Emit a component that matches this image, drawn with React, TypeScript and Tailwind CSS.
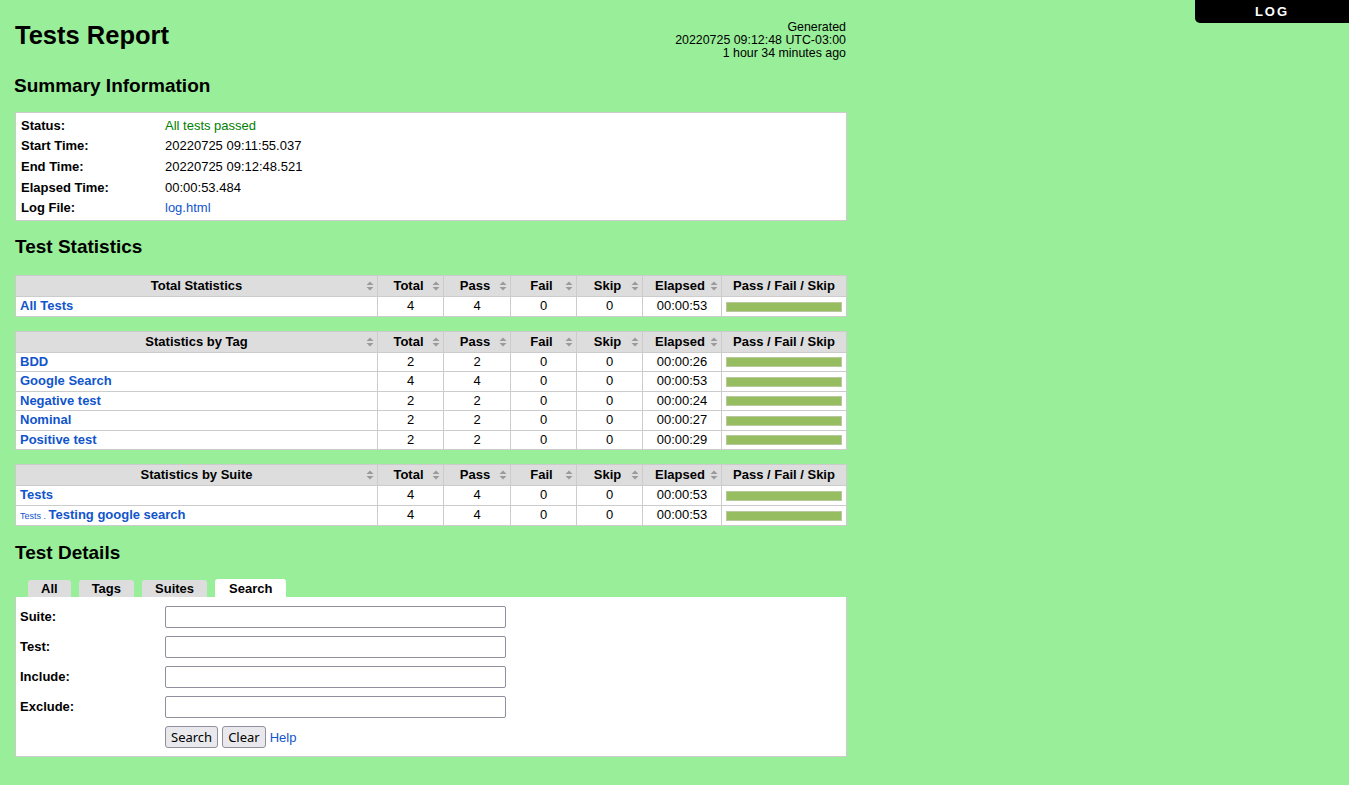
import React from 'react';

const LINK = 'text-[#1155cc]';

const SortIcon: React.FC = () => (
  <svg width="8" height="11" viewBox="0 0 8 11" className="block">
    <path d="M4 1 L7.5 4.5 L0.5 4.5 Z" fill="#9a9a9a" />
    <path d="M4 10 L7.5 6.5 L0.5 6.5 Z" fill="#9a9a9a" />
  </svg>
);

type Row = { name: React.ReactNode; total: number; pass: number; elapsed: string };

const cols = [
  { label: 'Total', w: 'w-[66px]' },
  { label: 'Pass', w: 'w-[67px]' },
  { label: 'Fail', w: 'w-[66px]' },
  { label: 'Skip', w: 'w-[66px]' },
  { label: 'Elapsed', w: 'w-[79px]' },
];

const StatTable: React.FC<{ title: string; rows: Row[] }> = ({ title, rows }) => (
  <table className="w-[832px] border-collapse border border-[#cccccc] bg-white text-[13px] leading-[18.5px] mb-[14px] table-fixed">
    <thead>
      <tr className="h-[21px] bg-[#dddddd]">
        <th className="border border-[#cccccc] font-bold relative">
          {title}
          <span className="absolute right-[3px] top-1/2 -translate-y-1/2"><SortIcon /></span>
        </th>
        {cols.map((c) => (
          <th key={c.label} className={`${c.w} border border-[#cccccc] font-bold relative pr-[4px]`}>
            {c.label}
            <span className="absolute right-[3px] top-1/2 -translate-y-1/2"><SortIcon /></span>
          </th>
        ))}
        <th className="w-[125px] border border-[#cccccc] font-bold">Pass / Fail / Skip</th>
      </tr>
    </thead>
    <tbody>
      {rows.map((r, i) => (
        <tr key={i}>
          <td className={`border border-[#cccccc] px-[4px] font-bold ${LINK}`}>{r.name}</td>
          <td className="border border-[#cccccc] text-center">{r.total}</td>
          <td className="border border-[#cccccc] text-center">{r.pass}</td>
          <td className="border border-[#cccccc] text-center">0</td>
          <td className="border border-[#cccccc] text-center">0</td>
          <td className="border border-[#cccccc] text-center">{r.elapsed}</td>
          <td className="border border-[#cccccc] px-[4px]">
            <div className="h-[10px] bg-[#97bd61] border border-[#b8c9a0]" />
          </td>
        </tr>
      ))}
    </tbody>
  </table>
);

const summary: [string, React.ReactNode][] = [
  ['Status:', <span className="text-[#008000]">All tests passed</span>],
  ['Start Time:', '20220725 09:11:55.037'],
  ['End Time:', '20220725 09:12:48.521'],
  ['Elapsed Time:', '00:00:53.484'],
  ['Log File:', <span className={LINK}>log.html</span>],
];

const btn =
  "h-[22px] px-[5px] border border-[#8f8f9d] rounded-[3px] bg-[#e9e9ed] font-['Noto_Sans',sans-serif] text-[13px] leading-[18px]";

const App: React.FC = () => {
  return (
    <div className="min-h-[785px] bg-[#99ee99] text-black font-['Liberation_Sans',Arial,sans-serif] text-[13px] relative">
      <div className="absolute right-0 top-0 w-[154px] h-[23px] bg-black rounded-bl-[5px] text-white font-bold text-[13px] tracking-[2px] flex items-center justify-center">
        LOG
      </div>
      <div className="w-[832px] ml-[15px] pt-[19px]">
        <div className="flex justify-between">
          <h1 className="text-[25.5px] font-bold leading-[30px] mt-[1px]">Tests Report</h1>
          <div className="text-right text-[12.4px] leading-[13px] pr-[1px] mt-[2px]">
            <div>Generated</div>
            <div>20220725 09:12:48 UTC-03:00</div>
            <div>1 hour 34 minutes ago</div>
          </div>
        </div>

        <h2 className="text-[19px] font-bold leading-[24px] mt-[14px] -ml-[1px]">Summary Information</h2>
        <div className="mt-[14px] bg-white border border-[#cccccc] py-[2px]">
          {summary.map(([k, v]) => (
            <div key={k} className="flex h-[20.7px] items-center">
              <div className="w-[149px] pl-[5px] font-bold">{k}</div>
              <div>{v}</div>
            </div>
          ))}
        </div>

        <h2 className="text-[19px] font-bold leading-[24px] mt-[14px]">Test Statistics</h2>
        <div className="mt-[16px]">
          <StatTable
            title="Total Statistics"
            rows={[{ name: 'All Tests', total: 4, pass: 4, elapsed: '00:00:53' }]}
          />
          <StatTable
            title="Statistics by Tag"
            rows={[
              { name: 'BDD', total: 2, pass: 2, elapsed: '00:00:26' },
              { name: 'Google Search', total: 4, pass: 4, elapsed: '00:00:53' },
              { name: 'Negative test', total: 2, pass: 2, elapsed: '00:00:24' },
              { name: 'Nominal', total: 2, pass: 2, elapsed: '00:00:27' },
              { name: 'Positive test', total: 2, pass: 2, elapsed: '00:00:29' },
            ]}
          />
          <StatTable
            title="Statistics by Suite"
            rows={[
              { name: 'Tests', total: 4, pass: 4, elapsed: '00:00:53' },
              {
                name: (
                  <>
                    <span className="text-[9px] font-normal">Tests . </span>Testing google search
                  </>
                ),
                total: 4,
                pass: 4,
                elapsed: '00:00:53',
              },
            ]}
          />
        </div>

        <h2 className="text-[19px] font-bold leading-[24px] mt-[15px]">Test Details</h2>
        <div className="flex items-end gap-[8px] pl-[13px] mt-[14px]">
          {['All', 'Tags', 'Suites'].map((t) => (
            <div key={t} className="h-[17px] px-[13px] bg-[#dddddd] rounded-t-[3px] font-bold leading-[17px]">
              {t}
            </div>
          ))}
          <div className="h-[18px] px-[14px] bg-white rounded-t-[3px] font-bold leading-[20px]">Search</div>
        </div>
        <div className="bg-white border border-[#cccccc] border-t-0 pt-[9px] pb-[8px]">
          {['Suite:', 'Test:', 'Include:', 'Exclude:'].map((l) => (
            <div key={l} className="flex items-start h-[30px]">
              <div className="w-[149px] pl-[4px] font-bold pt-[1px]">{l}</div>
              <input className="w-[341px] h-[22px] border border-[#8f8f9d] rounded-[2px] bg-white" />
            </div>
          ))}
          <div className="flex items-center gap-[4px] pl-[149px]">
            <button className={btn}>Search</button>
            <button className={btn}>Clear</button>
            <span className={LINK}>Help</span>
          </div>
        </div>
      </div>
    </div>
  );
};

export default App;
